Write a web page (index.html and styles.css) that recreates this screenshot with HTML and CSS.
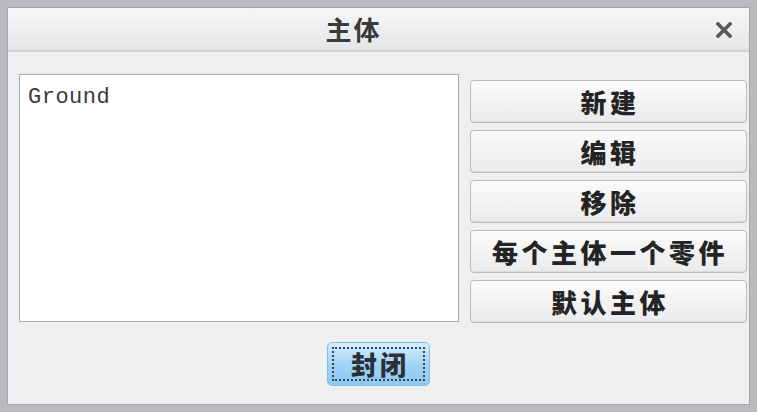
FILE: index.html
```html
<!DOCTYPE html>
<html lang="zh">
<head>
<meta charset="utf-8">
<link rel="stylesheet" href="styles.css">
</head>
<body>
<div class="dialog">
  <div class="titlebar">
    <span class="title">主体</span>
    <svg class="close-x" width="16" height="16" viewBox="0 0 16 16"><path d="M2 2 L14 14 M14 2 L2 14" stroke="#595959" stroke-width="3.6" stroke-linecap="square"/></svg>
  </div>
  <div class="content">
    <div class="main">
      <div class="listbox"><div class="item">Ground</div></div>
      <div class="buttons">
        <button class="btn">新建</button>
        <button class="btn">编辑</button>
        <button class="btn">移除</button>
        <button class="btn">每个主体一个零件</button>
        <button class="btn">默认主体</button>
      </div>
    </div>
    <div class="footer">
      <button class="close-btn"><span class="focus">封闭</span></button>
    </div>
  </div>
</div>
</body>
</html>
```
FILE: styles.css
```css
html, body { margin: 0; padding: 0; }
body {
  width: 757px;
  height: 412px;
  box-sizing: border-box;
  background: #b9bbbe;
  padding: 7px 7px 7px 7px;
  font-family: "Noto Sans CJK SC", "Noto Sans", sans-serif;
}
.dialog {
  height: 100%;
  box-sizing: border-box;
  background: #eeeff1;
  border: 1px solid #a4a6a9;
  display: flex;
  flex-direction: column;
}
.titlebar {
  height: 44px;
  flex: none;
  box-sizing: border-box;
  background: linear-gradient(#f6f7f8, #e4e5e7);
  border-bottom: 2px solid #cfd0d2;
  display: flex;
  align-items: center;
  justify-content: center;
  position: relative;
}
.title {
  font-size: 26px;
  font-weight: bold;
  color: #3a3a3a;
  letter-spacing: 2px;
  line-height: 1;
  margin-right: 50px;
}
.close-x {
  position: absolute;
  right: 17px;
  top: 14px;
}
.content {
  flex: 1;
  display: flex;
  flex-direction: column;
  padding: 22px 2px 0 11px;
}
.main {
  display: flex;
  gap: 11px;
}
.listbox {
  width: 440px;
  height: 248px;
  box-sizing: border-box;
  background: #ffffff;
  border: 1px solid #a9abad;
  padding: 10px 0 0 8px;
}
.item {
  font-family: "Liberation Mono", "DejaVu Sans Mono", monospace;
  font-size: 22px;
  color: #3a3a3a;
  line-height: 26px;
  letter-spacing: 0.5px;
}
.buttons {
  width: 277px;
  display: flex;
  flex-direction: column;
  gap: 7px;
  padding-top: 6px;
}
.btn {
  height: 43px;
  box-sizing: border-box;
  margin: 0;
  border: 1px solid #b9babc;
  border-radius: 4px;
  background: linear-gradient(#fbfbfb, #eaebec);
  box-shadow: inset 0 -1px 0 #dcdcdc;
  font-family: "Noto Sans CJK SC", sans-serif;
  font-size: 26px;
  font-weight: 900;
  color: #242424;
  letter-spacing: 3.5px;
  line-height: 1;
  padding: 0 0 0 3px;
}
.footer {
  display: flex;
  justify-content: center;
  padding-top: 19px;
  padding-right: 9px;
}
.close-btn {
  width: 103px;
  height: 44px;
  box-sizing: border-box;
  margin: 0;
  padding: 4px;
  border: 1px solid #86bde4;
  border-radius: 5px;
  background: linear-gradient(#d6eefd, #9fd2f5 55%, #8ccaf3);
  display: flex;
}
.focus {
  flex: 1;
  border: 2px dotted #3b4250;
  display: flex;
  align-items: center;
  justify-content: center;
  font-family: "Noto Sans CJK SC", sans-serif;
  font-size: 26px;
  font-weight: 900;
  color: #2a2f38;
  letter-spacing: 3px;
  line-height: 1;
  padding-left: 3px;
}
```
